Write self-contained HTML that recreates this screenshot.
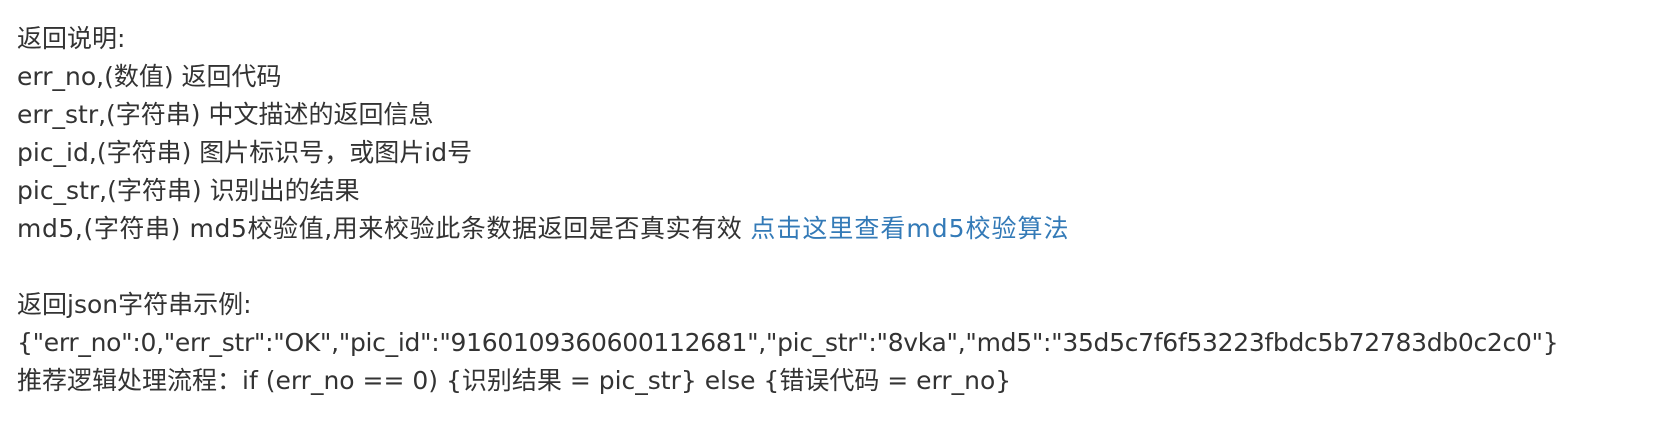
<!DOCTYPE html>
<html><head><meta charset="utf-8"><style>
html,body{margin:0;padding:0;background:#fff;width:1656px;height:435px;overflow:hidden}
.c{position:absolute;left:17px;top:20px;font-family:"DejaVu Sans","Noto Sans CJK SC",sans-serif;font-size:25px;line-height:38px;color:#333;white-space:nowrap}
a{color:#337ab7;text-decoration:none;letter-spacing:1px}
.j{letter-spacing:-0.3px}
</style></head><body><div class="c">
返回说明:<br>
err_no,(数值) 返回代码<br>
err_str,(字符串) 中文描述的返回信息<br>
pic_id,(字符串) 图片标识号，或图片id号<br>
pic_str,(字符串) 识别出的结果<br>
<span style="letter-spacing:0.6px">md5,(字符串) md5校验值,用来校验此条数据返回是否真实有效</span> <a>点击这里查看md5校验算法</a><br>
<br>
返回json字符串示例:<br>
<span class="j">{"err_no":0,"err_str":"OK","pic_id":"9160109360600112681","pic_str":"8vka","md5":"35d5c7f6f53223fbdc5b72783db0c2c0"}</span><br>
推荐逻辑处理流程：if (err_no == 0) {识别结果 = pic_str} else {错误代码 = err_no}
</div></body></html>
